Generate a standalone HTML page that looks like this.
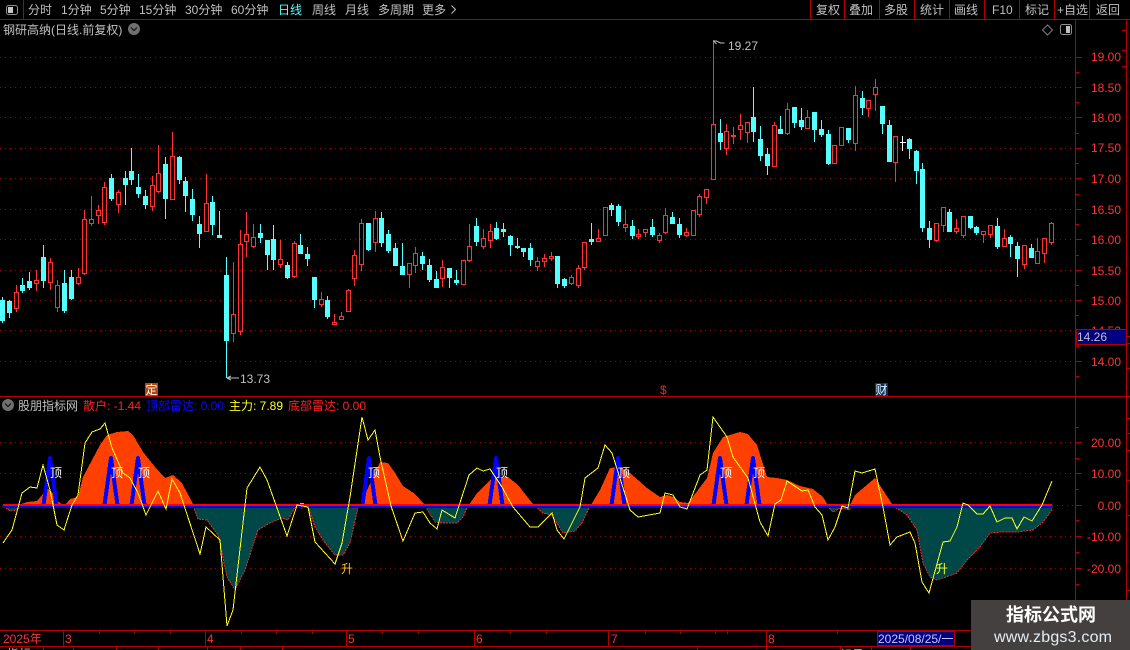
<!DOCTYPE html>
<html><head><meta charset="utf-8"><title>钢研高纳</title>
<style>
html,body{margin:0;padding:0;background:#000;width:1130px;height:650px;overflow:hidden}
svg{display:block;font-family:"Liberation Sans","WenQuanYi Zen Hei","Noto Sans CJK SC",sans-serif;font-size:12px}
</style></head><body>
<svg width="1130" height="650" viewBox="0 0 1130 650" xmlns="http://www.w3.org/2000/svg">
<rect width="1130" height="650" fill="#000"/>
<!-- grid -->
<g stroke="#a00000" stroke-dasharray="1 4" fill="none" shape-rendering="crispEdges">
<path d="M0 57.5H1075M0 87.5H1075M0 117.5H1075M0 148.5H1075M0 178.5H1075M0 209.5H1075M0 239.5H1075M0 270.5H1075M0 300.5H1075M0 330.5H1075M0 361.5H1075"/>
<path d="M0 442.5H1075M0 473.5H1075M1052 505.5H1075M0 536.5H1075M0 568.5H1075"/>
</g>
<!-- frame lines -->
<g stroke="#b00000" fill="none" shape-rendering="crispEdges">
<path d="M0 19.5H1130M0 396.5H1130M0 630.5H1130M0 646.5H1130"/>
<path d="M23.5 0V19M810.5 0V19M844.5 0V19M879.5 0V19M914.5 0V19M949.5 0V19M984.5 0V19M1019.5 0V19M1054.5 0V19M1089.5 0V19"/>
<path d="M1075.5 19V631M1126.5 19V650" stroke-width="1"/>
<path d="M1076 57.5h6M1076 87.5h6M1076 117.5h6M1076 148.5h6M1076 178.5h6M1076 209.5h6M1076 239.5h6M1076 270.5h6M1076 300.5h6M1076 330.5h6M1076 361.5h6"/>
<path d="M1076 72.5h3M1076 102.5h3M1076 133.5h3M1076 163.5h3M1076 194.5h3M1076 224.5h3M1076 255.5h3M1076 285.5h3M1076 315.5h3M1076 346.5h3M1076 376.5h3"/>
<path d="M1076 442.5h6M1076 473.5h6M1076 505.5h6M1076 536.5h6M1076 568.5h6M1076 427.5h3M1076 458.5h3M1076 489.5h3M1076 520.5h3M1076 552.5h3M1076 584.5h3"/>
<path d="M1122 30.5h4M1122 50.5h4M1122 66.5h4M1127 336.5h3M1127 343.5h3M1127 368.5h3M1127 418.5h3M1127 433.5h3M1127 450.5h3M1127 480.5h3M1127 515.5h3M1127 590.5h3"/>
<path d="M63.5 631V646M205.5 631V646M346.5 631V646M474.5 631V646M608.5 631V646M766.5 631V646"/>
<path d="M99.5 631v3M134.5 631v3M170.5 631v3M241.5 631v3M276.5 631v3M312.5 631v3M382.5 631v3M418.5 631v3M510.5 631v3M546.5 631v3M645.5 631v3M680.5 631v3M715.5 631v3M727.5 631v3M837.5 631v3"/>
<path d="M43.5 646v4M73.5 646v4M116.5 646v4M158.5 646v4M207.5 646v4M240.5 646v4M282.5 646v4M697.5 646v4M766.5 646v4M840.5 646v4M871.5 646v4M910.5 646v4"/>
</g>
<!-- red candles -->
<path fill="none" stroke="#ff3232" shape-rendering="crispEdges" d="M16.5 285V292M16.5 308V312M14.5 292.5h4v16h-4zM36.5 270V280M36.5 283V291M34.5 280.5h4v3h-4zM50.5 258V262M50.5 282V290M48.5 262.5h4v20h-4zM57.5 280V285M57.5 307V312M55.5 285.5h4v22h-4zM78.5 268V277M78.5 283V285M76.5 277.5h4v6h-4z
M84.5 210V219M84.5 273V275M82.5 219.5h4v54h-4zM91.5 196V219M91.5 223V226M89.5 219.5h4v4h-4zM98.5 205V210M98.5 215V224M96.5 210.5h4v5h-4zM104.5 182V187M104.5 222V225M102.5 187.5h4v35h-4zM118.5 190V192M118.5 204V213M116.5 192.5h4v12h-4zM152.5 176V185M152.5 206V211M150.5 185.5h4v21h-4zM158.5 145V173M158.5 191V193M156.5 173.5h4v18h-4zM172.5 132V156M172.5 199V200M170.5 156.5h4v43h-4zM206.5 174V203M206.5 231V232M204.5 203.5h4v28h-4z
M233.5 262V314M233.5 333V342M231.5 314.5h4v19h-4zM240.5 230V244M240.5 331V335M238.5 244.5h4v87h-4zM246.5 212V234M246.5 241V257M244.5 234.5h4v7h-4zM253.5 224V237M253.5 246V248M251.5 237.5h4v9h-4zM280.5 240V259M280.5 264V268M278.5 259.5h4v5h-4zM294.5 241V243M294.5 276V278M292.5 243.5h4v33h-4zM321.5 292V299M321.5 304V307M319.5 299.5h4v5h-4zM334.5 314V322M332.5 322.5h4v2h-4zM341.5 312V316M339.5 316.5h4v3h-4zM348.5 289V290M346.5 290.5h4v21h-4zM354.5 250V255M354.5 278V286M352.5 255.5h4v23h-4zM361.5 219V223M361.5 264V271M359.5 223.5h4v41h-4zM375.5 211V218M375.5 242V252M373.5 218.5h4v24h-4z
M409.5 274V288M407.5 263.5h4v11h-4zM415.5 247V253M415.5 265V273M413.5 253.5h4v12h-4zM442.5 260V267M442.5 278V287M440.5 267.5h4v11h-4zM463.5 284V285M461.5 260.5h4v24h-4zM469.5 224V246M469.5 260V262M467.5 246.5h4v14h-4zM483.5 229V238M483.5 246V249M481.5 238.5h4v8h-4zM490.5 224V231M490.5 240V248M488.5 231.5h4v9h-4zM537.5 257V261M537.5 266V271M535.5 261.5h4v5h-4zM544.5 254V258M544.5 261V267M542.5 258.5h4v3h-4zM551.5 252V256M551.5 258V261M549.5 256.5h4v2h-4z
M571.5 275V277M571.5 283V285M569.5 277.5h4v6h-4zM578.5 265V268M578.5 285V288M576.5 268.5h4v17h-4zM584.5 267V270M582.5 242.5h4v25h-4zM598.5 229V238M596.5 238.5h4v3h-4zM603.5 207.5h4v28h-4zM625.5 210V224M625.5 227V232M623.5 224.5h4v3h-4zM638.5 229V234M638.5 236V239M636.5 234.5h4v2h-4zM645.5 232V237M643.5 229.5h4v3h-4zM659.5 233V235M659.5 240V243M657.5 235.5h4v5h-4zM665.5 208V215M665.5 232V234M663.5 215.5h4v17h-4zM686.5 228V232M686.5 235V237M684.5 232.5h4v3h-4zM691.5 210.5h4v25h-4zM699.5 194V196M699.5 214V217M697.5 196.5h4v18h-4zM706.5 197V204M704.5 189.5h4v8h-4z
M713.5 40V124M711.5 124.5h4v55h-4zM726.5 124V131M726.5 148V155M724.5 131.5h4v17h-4zM733.5 127V135M733.5 136V144M731.5 135.5h4v1h-4zM740.5 114V125M740.5 129V140M738.5 125.5h4v4h-4zM747.5 132V143M745.5 122.5h4v10h-4zM774.5 122V125M772.5 125.5h4v41h-4zM787.5 103V109M787.5 133V135M785.5 109.5h4v24h-4zM807.5 110V117M805.5 117.5h4v11h-4zM834.5 163V164M832.5 145.5h4v18h-4zM839.5 127.5h4v18h-4zM855.5 86V95M855.5 143V151M853.5 95.5h4v48h-4zM868.5 108V117M866.5 100.5h4v8h-4zM875.5 79V87M875.5 94V111M873.5 87.5h4v7h-4zM895.5 162V182M893.5 136.5h4v26h-4z
M936.5 240V242M934.5 223.5h4v17h-4zM943.5 225V232M941.5 207.5h4v18h-4zM956.5 219V228M956.5 231V234M954.5 228.5h4v3h-4zM963.5 235V238M961.5 216.5h4v19h-4zM983.5 234V243M981.5 231.5h4v3h-4zM990.5 234V238M988.5 225.5h4v9h-4zM1004.5 229V238M1002.5 238.5h4v8h-4zM1024.5 264V269M1022.5 245.5h4v19h-4zM1037.5 238V251M1035.5 251.5h4v12h-4zM1044.5 253V263M1042.5 238.5h4v15h-4zM1051.5 222V223M1051.5 242V245M1049.5 223.5h4v19h-4z"/>
<!-- cyan candles -->
<path fill="#54ffff" stroke="#54ffff" shape-rendering="crispEdges" d="M2.5 297V323M.5 300.5h4v20h-4zM9.5 300V318M7.5 301.5h4v11h-4zM22.5 278V293M20.5 285.5h4v5h-4zM29.5 272V290M27.5 281.5h4v6h-4zM43.5 245V288M41.5 257.5h4v23h-4zM64.5 270V313M62.5 283.5h4v27h-4zM71.5 270V300M69.5 277.5h4v21h-4z
M111.5 174V201M109.5 178.5h4v20h-4zM125.5 171V205M123.5 178.5h4v6h-4zM131.5 148V185M129.5 171.5h4v8h-4zM138.5 174V198M136.5 187.5h4v6h-4zM145.5 190V209M143.5 196.5h4v8h-4zM165.5 157V219M163.5 164.5h4v34h-4zM179.5 156V184M177.5 157.5h4v22h-4zM185.5 177V212M183.5 181.5h4v14h-4zM192.5 189V221M190.5 199.5h4v15h-4zM199.5 216V248M197.5 224.5h4v9h-4zM212.5 196V235M210.5 202.5h4v22h-4zM219.5 211V238M217.5 235.5h4v2h-4zM226.5 257V378M224.5 275.5h4v65h-4z
M260.5 224V243M258.5 233.5h4v4h-4zM267.5 240V270M265.5 240.5h4v14h-4zM273.5 225V270M271.5 239.5h4v20h-4zM287.5 262V279M285.5 265.5h4v12h-4zM300.5 234V254M298.5 245.5h4v8h-4zM307.5 247V266M305.5 254.5h4v4h-4zM314.5 277V308M312.5 277.5h4v22h-4zM327.5 296V319M325.5 300.5h4v16h-4zM368.5 223V251M366.5 223.5h4v26h-4zM381.5 212V247M379.5 218.5h4v24h-4zM388.5 230V253M386.5 234.5h4v16h-4zM395.5 243V266M393.5 248.5h4v17h-4zM402.5 243V275M400.5 266.5h4v8h-4zM422.5 252V270M420.5 256.5h4v7h-4zM429.5 259V282M427.5 265.5h4v14h-4zM436.5 271V288M434.5 279.5h4v8h-4zM449.5 268V288M447.5 268.5h4v9h-4zM456.5 270V285M454.5 280.5h4v2h-4z
M476.5 218V246M474.5 226.5h4v15h-4zM496.5 222V240M494.5 228.5h4v10h-4zM503.5 223V237M501.5 229.5h4v2h-4zM510.5 235V256M508.5 236.5h4v8h-4zM517.5 238V249M515.5 246.5h4v1h-4zM523.5 248V257M521.5 248.5h4v3h-4zM530.5 243V266M528.5 248.5h4v11h-4zM557.5 256V288M555.5 256.5h4v27h-4zM564.5 278V288M562.5 279.5h4v6h-4zM591.5 223V245M589.5 239.5h4v2h-4zM611.5 203V216M609.5 205.5h4v4h-4zM618.5 204V226M616.5 206.5h4v15h-4zM632.5 220V239M630.5 226.5h4v9h-4zM652.5 219V237M650.5 227.5h4v7h-4zM672.5 212V223M670.5 217.5h4v6h-4zM679.5 218V238M677.5 224.5h4v10h-4z
M720.5 119V150M718.5 133.5h4v8h-4zM753.5 87V142M751.5 117.5h4v14h-4zM760.5 126V161M758.5 139.5h4v16h-4zM767.5 148V175M765.5 154.5h4v11h-4zM780.5 116V134M778.5 129.5h4v4h-4zM794.5 107V128M792.5 107.5h4v15h-4zM801.5 108V130M799.5 120.5h4v6h-4zM814.5 112V142M812.5 112.5h4v17h-4zM821.5 120V137M819.5 129.5h4v5h-4zM828.5 130V165M826.5 134.5h4v29h-4zM848.5 128V143M846.5 128.5h4v11h-4zM862.5 91V115M860.5 98.5h4v9h-4zM882.5 106V134M880.5 106.5h4v17h-4zM889.5 120V161M887.5 125.5h4v36h-4zM909.5 138V159M907.5 139.5h4v9h-4zM916.5 150V184M914.5 151.5h4v19h-4zM922.5 163V232M920.5 169.5h4v58h-4zM929.5 221V248M927.5 228.5h4v11h-4zM949.5 209V232M947.5 212.5h4v19h-4zM970.5 216V229M968.5 216.5h4v11h-4zM976.5 226V235M974.5 227.5h4v5h-4zM997.5 218V249M995.5 226.5h4v20h-4zM1010.5 235V257M1008.5 237.5h4v6h-4zM1017.5 242V277M1015.5 246.5h4v12h-4zM1031.5 244V257M1029.5 248.5h4v9h-4z"/>
<path stroke="#fff" fill="none" shape-rendering="crispEdges" d="M902.5 136V151M900 142.5h6"/>
<!-- right price box -->
<g fill="#ff3232" text-anchor="end">
<text x="1121" y="61">19.00</text><text x="1121" y="92">18.50</text><text x="1121" y="122">18.00</text><text x="1121" y="152">17.50</text><text x="1121" y="183">17.00</text><text x="1121" y="214">16.50</text><text x="1121" y="244">16.00</text><text x="1121" y="275">15.50</text><text x="1121" y="305">15.00</text><text x="1121" y="335">14.50</text><text x="1121" y="366">14.00</text>
<text x="1121" y="447">20.00</text><text x="1121" y="478">10.00</text><text x="1121" y="510">0.00</text><text x="1121" y="541">-10.00</text><text x="1121" y="573">-20.00</text>
</g>
<rect x="1076.5" y="329.5" width="50" height="15" fill="#000080" stroke="#b00000" shape-rendering="crispEdges"/>
<text x="1077" y="341" fill="#c0c0c0">14.26</text>
<!-- top bar -->
<rect x="6.5" y="5.5" width="11" height="9" rx="2" fill="none" stroke="#909090"/><rect x="8" y="7" width="5" height="6" fill="#c8c8c8"/>
<g fill="#c0c0c0">
<text x="28" y="14">分时</text><text x="61" y="14">1分钟</text><text x="100" y="14">5分钟</text><text x="139" y="14">15分钟</text><text x="185" y="14">30分钟</text><text x="231" y="14">60分钟</text>
<text x="278" y="14" fill="#54ffff">日线</text>
<text x="312" y="14">周线</text><text x="345" y="14">月线</text><text x="378" y="14">多周期</text><text x="422" y="14">更多</text>
<text x="816" y="14">复权</text><text x="849" y="14">叠加</text><text x="884" y="14">多股</text><text x="920" y="14">统计</text><text x="954" y="14">画线</text><text x="992" y="14">F10</text><text x="1025" y="14">标记</text><text x="1057" y="14">+自选</text><text x="1096" y="14">返回</text>
<text x="3" y="34">钢研高纳(日线.前复权)</text>
</g>
<path d="M451.5 5.5l4 4-4 4" fill="none" stroke="#c0c0c0"/>
<circle cx="134" cy="29" r="6" fill="#707070"/><path d="M131 27.5l3 3 3-3" fill="none" stroke="#111" stroke-width="1.2"/>
<path d="M1047.5 25l5 5-5 5-5-5z" fill="none" stroke="#808080"/>
<rect x="1060.5" y="24.5" width="11" height="10" rx="2" fill="none" stroke="#909090"/><rect x="1066" y="26" width="4" height="7" fill="#c0c0c0"/>
<!-- extrema labels -->
<path d="M713.5 41l3 3M713.5 41h3l4 2h4" fill="none" stroke="#c0c0c0"/>
<text x="728" y="50" fill="#c0c0c0">19.27</text>
<path d="M227 378l4-2M227 378l4 2M227 378h12" fill="none" stroke="#c0c0c0"/>
<text x="240" y="383" fill="#c0c0c0">13.73</text>
<!-- markers -->
<rect x="145" y="383" width="13" height="13" fill="#b04810"/>
<text x="145.5" y="394" fill="#fff">定</text>
<text x="660" y="394" fill="#ff2020">$</text>
<rect x="875" y="383" width="13" height="13" fill="#103060"/>
<text x="875.5" y="394" fill="#e8f8ff">财</text>
<!-- indicator header -->
<circle cx="8" cy="405" r="6" fill="#707070"/><path d="M5 403.5l3 3 3-3" fill="none" stroke="#111" stroke-width="1.2"/>
<text x="18" y="410" fill="#c0c0c0">股朋指标网</text>
<text x="83" y="410" fill="#ff2020">散户: -1.44</text>
<text x="146" y="410" fill="#0a0aff">顶部雷达: 0.00</text>
<text x="229" y="410" fill="#ffff20">主力: 7.89</text>
<text x="288" y="410" fill="#ff2020">底部雷达: 0.00</text>
<!-- teal areas -->
<g fill="#004848" stroke="#ff2020" stroke-dasharray="2 1" shape-rendering="crispEdges">
<path d="M3 506L10 511 17 510 20 506z"/>
<path d="M193 506L198 519 207 520 218 535 222 553 227 577 235 590 245 570 258 530 270 523 282 518 288 520 295 507z"/>
<path d="M295 506L302 508 307 506z"/>
<path d="M308 506L315 527 325 543 335 555 343 555 350 543 358 508z"/>
<path d="M425 506L435 522 443 523 457 523 463 517 468 506z"/>
<path d="M535 506L543 513 552 515 563 533 575 531 582 523 590 506z"/>
<path d="M827 506L833 512 840 508 850 510 850 506z"/>
<path d="M893 506L907 515 917 530 923 563 930 577 937 580 957 573 967 560 980 547 990 533 1003 532 1017 532 1033 530 1043 522 1052 510 1052 506z"/>
</g>
<!-- orange areas -->
<g fill="#ff4000" shape-rendering="crispEdges">
<path d="M18 505L27 502 37 501 42 495 47 488 52 492 57 501 62 504 65 505 70 499 78 497 83 477 92 460 100 445 107 435 117 432 128 431 133 435 143 452 155 467 165 478 173 475 182 483 193 504 193 505z"/>
<path d="M360 505L367 490 380 462 388 463 395 473 403 486 415 494 424 504 424 505z"/>
<path d="M469 505L477 493 492 478 508 477 518 485 533 504 533 505z"/>
<path d="M591 505L600 490 610 468 620 467 630 473 647 488 660 497 667 495 673 497 680 502 688 503 698 490 707 478 713 453 723 437 740 432 748 434 757 445 767 477 777 478 787 480 800 486 813 489 823 497 827 504 827 505z"/>
<path d="M850 505L855 495 875 478 883 490 892 504 892 505z"/>
</g>
<rect x="300" y="503" width="4" height="1" fill="#ffb000"/>
<!-- blue spikes -->
<g fill="none" stroke="#0000ff" stroke-width="4" stroke-linejoin="round" shape-rendering="crispEdges">
<path d="M43.5 505L50 458 56.5 505M104.5 505L111 458 117.5 505M131.5 505L138 458 144.5 505M362.5 505L369 458 375.5 505M489.5 505L496 458 502.5 505M611.5 505L618 458 624.5 505M713.5 505L720 458 726.5 505M746.5 505L753 458 759.5 505"/>
</g>
<!-- zero lines -->
<rect x="3" y="506" width="1049" height="2" fill="#0000ff"/>
<rect x="3" y="504" width="1049" height="2" fill="#ff0000"/>
<!-- yellow line -->
<path fill="none" stroke="#ffff20" shape-rendering="crispEdges" d="M3 543L12 530 22 493 30 487 37 488 43 465 50 490 57 525 64 530 72 505 78 495 85 443 92 432 100 429 105 423 112 448 123 473 130 478 138 493 146 515 158 491 166 509 172 479 180 493 200 554 206 527 220 540 227 626 233 610 247 488 260 467 267 480 287 536 297 505 308 507 315 542 325 553 335 564 342 543 350 497 362 417 368 440 375 430 380 457 391 506 403 541 415 513 423 512 430 523 437 529 442 510 455 518 469 475 477 468 483 471 490 469 502 487 513 507 530 527 538 527 552 513 557 530 564 539 580 507 585 478 598 468 605 445 612 453 630 510 638 517 660 513 665 493 673 495 680 507 687 509 700 475 707 470 713 417 727 437 733 457 748 478 760 522 768 536 775 504 781 500 787 481 802 491 808 490 815 507 822 515 828 540 835 527 842 506 848 508 855 471 862 473 875 469 883 507 890 545 897 537 910 532 915 543 922 582 929 593 943 542 950 541 957 527 963 503 968 505 977 514 983 514 990 506 997 522 1005 518 1012 518 1017 529 1024 517 1032 521 1042 505 1052 481"/>
<!-- signal labels -->
<g fill="#fff">
<text x="50" y="477">顶</text><text x="111" y="477">顶</text><text x="138" y="477">顶</text><text x="368" y="477">顶</text><text x="496" y="477">顶</text><text x="618" y="477">顶</text><text x="720" y="477">顶</text><text x="753" y="477">顶</text>
</g>
<text x="341" y="573" fill="#ffc020">升</text>
<text x="936" y="573" fill="#ffff20">升</text>
<!-- bottom axis -->
<g fill="#ff3232">
<text x="3" y="643">2025年</text><text x="65" y="643">3</text><text x="207" y="643">4</text><text x="348" y="643">5</text><text x="476" y="643">6</text><text x="611" y="643">7</text><text x="768" y="643">8</text>
</g>
<rect x="877.5" y="631.5" width="77" height="14" fill="#000080" stroke="#b00000" shape-rendering="crispEdges"/>
<text x="878" y="643" fill="#c0c8ff">2025/08/25/一</text>
<text x="7" y="658" fill="#c0c0c0">指标</text>
<text x="840" y="659" fill="#54ffff">标号</text>
<!-- watermark -->
<rect x="971" y="600" width="159" height="50" fill="#454040"/>
<text x="1006" y="621" fill="#fff" font-weight="bold" style="font-size:18px">指标公式网</text>
<text x="994" y="642" fill="#e4ecf4" style="font-size:16px;letter-spacing:.2px">www.zbgs3.com</text>
</svg>
</body></html>
